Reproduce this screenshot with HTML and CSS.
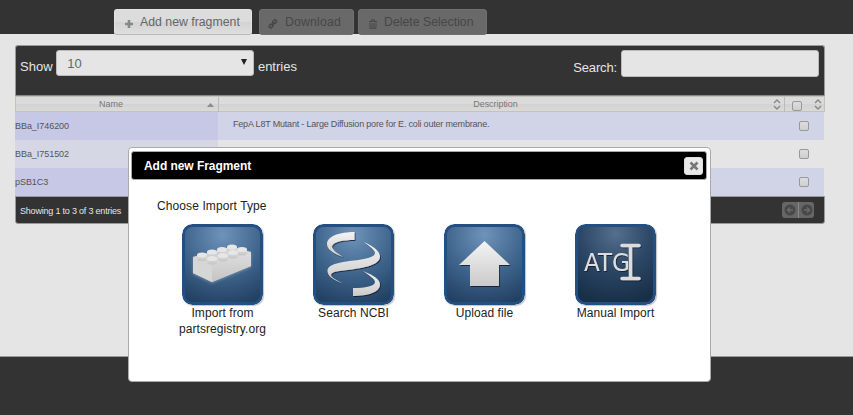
FILE: index.html
```html
<!DOCTYPE html>
<html lang="en">
<head>
<meta charset="utf-8">
<title>Fragments</title>
<link rel="stylesheet" href="styles.css">
</head>
<body>
<svg class="defs" width="0" height="0">
  <defs>
    <radialGradient id="blue" cx=".5" cy=".12" r=".95"><stop offset="0" stop-color="#6f93b9"/><stop offset=".5" stop-color="#41678f"/><stop offset="1" stop-color="#203e60"/></radialGradient>
    <radialGradient id="navy" cx=".5" cy=".1" r=".9"><stop offset="0" stop-color="#556f8d"/><stop offset=".5" stop-color="#2c4866"/><stop offset="1" stop-color="#182f48"/></radialGradient>
    <linearGradient id="silver" x1="0" y1="0" x2="0" y2="1"><stop offset="0" stop-color="#f4f4f4"/><stop offset="1" stop-color="#cacaca"/></linearGradient>
    <linearGradient id="studside" x1="0" y1="0" x2="0" y2="1"><stop offset="0" stop-color="#dedede"/><stop offset="1" stop-color="#c4c4c4"/></linearGradient>
    <filter id="shade" x="-20%" y="-20%" width="140%" height="150%"><feDropShadow dx=".8" dy="1" stdDeviation=".7" flood-color="#101820" flood-opacity=".75"/></filter>
    <filter id="glow" x="-20%" y="-20%" width="140%" height="150%"><feDropShadow dx="0" dy="1" stdDeviation="1.5" flood-color="#9aa9b8" flood-opacity=".6"/></filter>
    <g id="stud"><path d="M-5 0v3.500a5 2.600 0 0 0 10 0v-3.500z" fill="url(#studside)"/><ellipse rx="5" ry="2.500" fill="#e6e6e6"/></g>
    <g id="sort" fill="none" stroke="#888" stroke-width="1.4"><path d="M1 4l3-3 3 3M1 7l3 3 3-3"/></g>
  </defs>
</svg>
<nav class="toolbar">
  <button class="tab add"><svg width="10" height="10"><path d="M5 1v8M1 5h8" stroke="#888" stroke-width="2.6"/></svg>Add new fragment</button>
  <button class="tab download off"><svg width="10" height="10" fill="none" stroke="#464646" stroke-width="1.4"><rect x="4.6" y="1.3" width="4" height="3" rx="1.3" transform="rotate(-45 6.6 2.8)"/><rect x="1" y="5.5" width="4" height="3" rx="1.3" transform="rotate(-45 3 7)"/><path d="M3.5 6.5l3-3"/></svg>Download</button>
  <button class="tab delete off"><svg width="10" height="10" fill="none" stroke="#484848"><path d="M1 2.5h8M3.5 2V.8h3V2M2 3.5v5.8h6V3.5M4 4v5M6 4v5"/></svg>Delete Selection</button>
</nav>
<main class="content">
  <section class="grid">
    <header class="filters">
      <label class="length">Show <span class="select">10<svg width="6" height="6"><path d="M0 0h6L3 6z" fill="#222"/></svg></span> entries</label>
      <label class="search"><span class="caption">Search:</span> <input type="text" class="query"></label>
    </header>
    <div class="row head">
      <div class="name">Name<svg class="asc" width="7" height="4"><path d="M0 4l3.5-4L7 4z" fill="#8c8c8c"/></svg></div>
      <div class="desc">Description<svg class="order" width="8" height="11"><use href="#sort"/></svg></div>
      <div class="pick"><i class="box"></i><svg class="order" width="8" height="11"><use href="#sort"/></svg></div>
    </div>
    <div class="row odd"><div class="name">BBa_I746200</div><div class="desc">FepA L8T Mutant - Large Diffusion pore for E. coli outer membrane.</div><div class="pick"><i class="box"></i></div></div>
    <div class="row even"><div class="name">BBa_I751502</div><div class="desc"></div><div class="pick"><i class="box"></i></div></div>
    <div class="row odd"><div class="name">pSB1C3</div><div class="desc"></div><div class="pick"><i class="box"></i></div></div>
    <footer class="status"><span>Showing 1 to 3 of 3 entries</span>
      <div class="pager"><span><svg width="12" height="12"><circle cx="6" cy="6" r="5.5" fill="#484848"/><path d="M9 6H3.5M6 3.5L3.5 6 6 8.500" fill="none" stroke="#6a6a6a" stroke-width="1.5"/></svg></span><span><svg width="12" height="12"><circle cx="6" cy="6" r="5.500" fill="#484848"/><path d="M3 6h5.500M6 3.500L8.500 6 6 8.500" fill="none" stroke="#6a6a6a" stroke-width="1.5"/></svg></span></div>
    </footer>
  </section>
</main>
<div class="dialog">
  <header class="title"><span>Add new Fragment</span><button class="close"><svg width="10" height="10"><path d="M1.500 1.500l7 7M8.500 1.500l-7 7" stroke="#777" stroke-width="2.600"/></svg></button></header>
  <p class="prompt">Choose Import Type</p>
  <div class="choices">
    <div class="choice"><svg class="tile" viewBox="0 0 81 81"><rect x="1.500" y="1.500" width="78" height="78" rx="9" fill="url(#blue)" stroke="#234f81" stroke-width="3"/>
      <g filter="url(#glow)"><path d="M11 33l39-8 19 3v14L30 58 11 49z" fill="#cfcfcf"/><path d="M11 33l19 7v18L11 49z" fill="#d6d6d6"/><path d="M30 40l39-12v14L30 58z" fill="url(#studside)"/><path d="M11 33l38-10 20 5-39 12z" fill="#d6d6d6"/></g>
      <use href="#stud" x="50" y="23"/><use href="#stud" x="40" y="25.500"/><use href="#stud" x="30" y="28"/><use href="#stud" x="20" y="31"/><use href="#stud" x="60" y="25.500"/><use href="#stud" x="51" y="28.500"/><use href="#stud" x="41" y="31.500"/><use href="#stud" x="30" y="34.500"/></svg>Import from<br>partsregistry.org</div>
    <div class="choice"><svg class="tile" viewBox="0 0 81 81"><rect x="1.500" y="1.500" width="78" height="78" rx="9" fill="url(#blue)" stroke="#234f81" stroke-width="3"/>
      <g fill="url(#silver)" filter="url(#shade)"><path d="M41.500 8v8C30 16 20 18 19 22.500c0 3 5 6.500 11 10.500C20 29.500 14 25 14 20 14 12 27 8 41.500 8z"/><path d="M51 18c10 4.500 16 9.500 16 14.500C67 40 55 43 42 45c-13 2-24 2-24 6 0 2 5 5 12 8.500C20 56 14.500 52 14.500 47 14.500 40 28 38 41 36.500 53 35 62 33 62 29c0-3-5-6.500-11-11z"/><path d="M50 47c11 4.500 17 8.500 17 13.500 0 8-13 11.500-27 11.500v-8c12 0 22-2 22-6 0-3-6-7-12-11z"/></g></svg>Search NCBI</div>
    <div class="choice"><svg class="tile" viewBox="0 0 81 81"><rect x="1.500" y="1.500" width="78" height="78" rx="9" fill="url(#blue)" stroke="#234f81" stroke-width="3"/><path d="M40.500 17L66 41H55v21H26V41H15z" fill="url(#silver)" filter="url(#shade)"/></svg>Upload file</div>
    <div class="choice"><svg class="tile" viewBox="0 0 81 81"><rect x="1.500" y="1.500" width="78" height="78" rx="9" fill="url(#navy)" stroke="#234f81" stroke-width="3"/><g filter="url(#shade)"><text class="codon" x="9" y="46.500" textLength="46" lengthAdjust="spacingAndGlyphs">ATG</text><path d="M47 21.500h17M47 54.500h17M55.500 21.500v33" fill="none" stroke="#dcdcdc" stroke-width="3.500" stroke-linecap="round"/></g></svg>Manual Import</div>
  </div>
</div>
</body>
</html>
```
FILE: styles.css
```css
* { box-sizing: border-box; }
body { margin: 0; height: 415px; overflow: hidden; background: #333; font-family: "Liberation Sans", Arial, sans-serif; font-size: 13px; color: #222; }
svg { display: block; flex: none; }
.defs { position: absolute; }
.toolbar { height: 34px; padding: 9px 0 0 114px; display: flex; position: relative; }
.tab { height: 26px; border: 1px solid #e3e3e3; border-bottom-color: #bbb; border-radius: 3px; padding: 0 0 0 9px; display: flex; align-items: center; gap: 6px; font: 12.3px "Liberation Sans", Arial, sans-serif; color: #666; background: linear-gradient(#dcdcdc 50%, #d3d3d3 50%, #dedede); white-space: nowrap; }
.tab svg { margin-top: 3px; }
.add { width: 138px; margin-right: 7px; }
.download { width: 95px; margin-right: 4px; padding-left: 8px; gap: 7px; letter-spacing: .15px; }
.delete { width: 129px; padding-left: 9px; }
.off { color: #474747; background: #696969; border-color: #707070; }
.content { height: 323px; background: #e5e5e5; padding: 11px 0 0 15px; border-bottom: 1px solid #999; }
.grid { width: 810px; height: 179px; }
.filters { height: 51px; border: 1px solid #999; border-bottom: 1px solid #888; border-radius: 3px 3px 0 0; background: #333; color: #e5e5e5; display: flex; justify-content: space-between; padding: 4px 5px 0 4px; }
.length, .search { display: flex; height: 32px; align-items: center; gap: 4px; }
.length { gap: 3.7px; }
.select { width: 198px; height: 26px; align-self: flex-start; border: 1px solid #bbb; border-radius: 3px; background: #e5e5e5; color: #666; display: flex; align-items: center; justify-content: space-between; padding: 1px 6px 0 10px; }
.select svg { margin-bottom: 3px; }
.search { height: 34px; }
.caption { letter-spacing: -.15px; }
.query { width: 198px; height: 27px; align-self: flex-start; border: 1px solid #bbb; border-radius: 3px; background: #e5e5e5; }
.row { height: 28px; display: grid; grid-template-columns: 203px 566px 1fr; width: 809px; font-size: 9px; letter-spacing: -.05px; color: #555; }
.row > div { display: flex; align-items: center; position: relative; }
.head { width: 810px; height: 16px; background: linear-gradient(#dbdbdb 50%, #d2d2d2 50%, #dadada); border: 1px solid #c3c3bd; color: #777; }
.head > div { justify-content: center; border-right: 1px solid #bbb; padding-bottom: 1px; }
.head .name { padding-right: 12px; }
.head .desc { padding-right: 12px; }
.head .pick { border: 0; }
.asc { position: absolute; right: 4px; bottom: 5px; }
.order { position: absolute; right: 3px; top: 2px; }
.pick .order { right: 2px; }
.box { width: 10px; height: 10px; border: 1px solid #999; border-radius: 2px; background: linear-gradient(#ddd, #cfcfcf); }
.head .box { margin: 4px 16px 0 0; flex: none; }
.odd { background: #d1d3e7; }
.odd .name { background: #c7c7e6; }
.even .name { background: #d6d7e4; }
.row:not(.head) .desc { padding: 0 0 4px 15px; letter-spacing: -.19px; }
.row:not(.head) .pick { justify-content: center; }
.status { height: 28px; background: #333; border: 1px solid #999; border-radius: 0 0 3px 3px; display: flex; align-items: center; justify-content: space-between; padding: 1px 10px 0 4px; color: #e5e5e5; font-size: 9px; letter-spacing: -.2px; }
.pager { display: flex; height: 16px; margin-bottom: 1px; border-radius: 3px; background: #666; }
.pager span { width: 16px; display: grid; place-items: center; }
.pager span + span { border-left: 1px solid #888; }
.dialog { position: absolute; left: 128px; top: 147px; width: 583px; height: 235px; background: #fff; border: 1px solid #aaa; border-radius: 4px; padding: 3px 3px 0 2px; }
.title { height: 29px; background: #000; border: 1px solid #aaa; border-radius: 3px; display: flex; align-items: center; justify-content: space-between; padding: 0 3px 0 12px; font-size: 12px; letter-spacing: -.05px; font-weight: bold; color: #fff; }
.close { width: 19px; height: 18px; padding: 0; display: grid; place-items: center; border: 1px solid #ddd; border-radius: 3px; background: #eaeaea; }
.prompt { margin: 19px 0 10px 26px; font-size: 12px; line-height: 15px; letter-spacing: .1px; }
.choices { display: flex; padding-left: 26px; }
.choice { width: 131px; text-align: center; font-size: 12px; line-height: 16px; letter-spacing: .07px; }
.tile { width: 81px; height: 81px; margin: 0 auto; border-radius: 10px; box-shadow: 1px 1px 1px #9999; }
.codon { font: 24px "DejaVu Sans", sans-serif; fill: #ddd; letter-spacing: 0; }
```
